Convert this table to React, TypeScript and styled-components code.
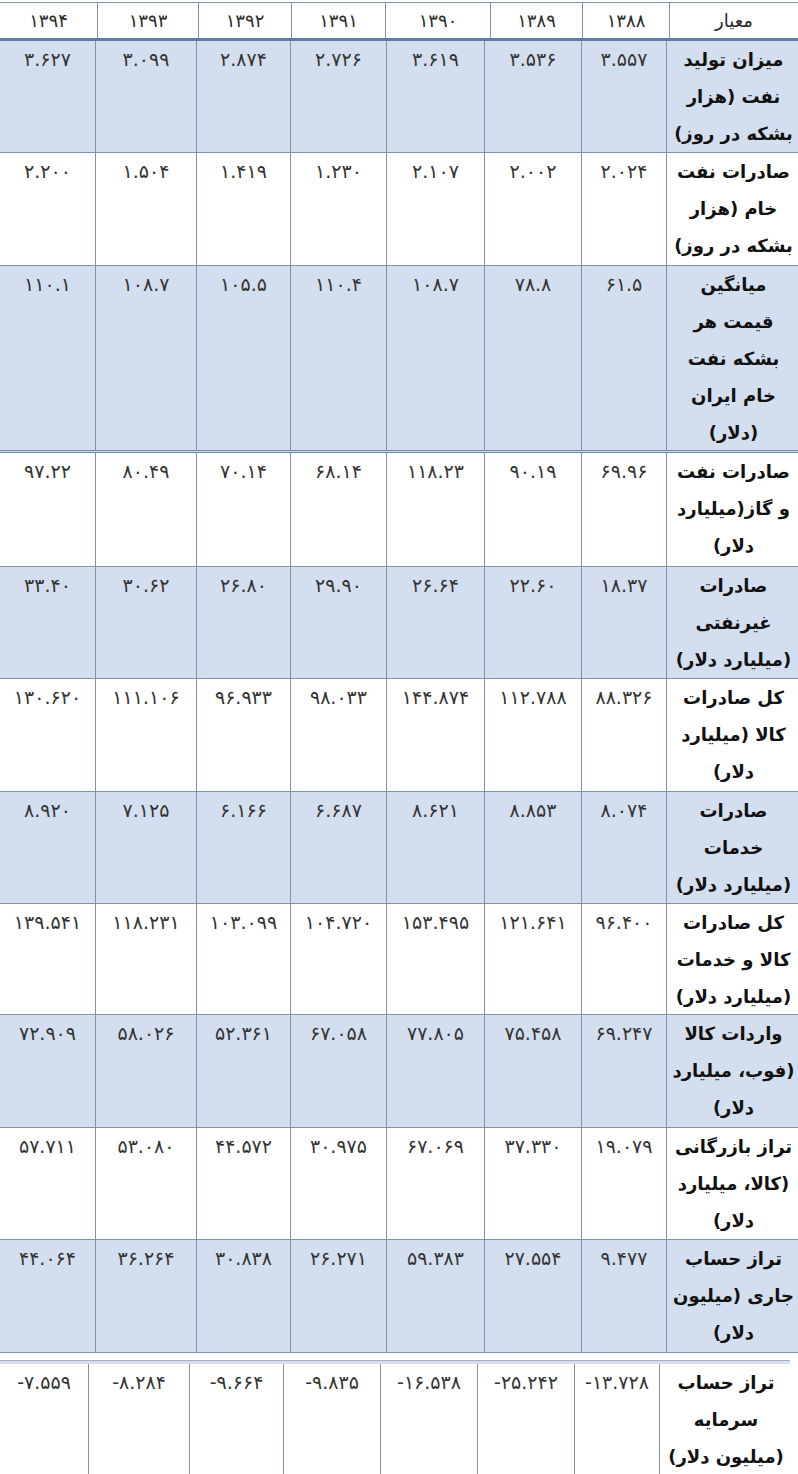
import React from 'react';
import styled, { createGlobalStyle } from 'styled-components';

const GlobalStyle = createGlobalStyle`
  html, body {
    margin: 0;
    padding: 0;
    background: #ffffff;
  }
  body {
    font-family: "DejaVu Sans", "Noto Sans", sans-serif;
    color: #111;
  }
`;

const HEAD_COLS = '128px 87px 92px 105px 94px 93px 101px 98px';
const BODY_COLS = '131px 85px 97px 98px 96px 94px 101px 96px';
const LAST_COLS = '130px 85px 97px 97px 97px 94px 101px 89px';

const fa = (s: string) => s.replace(/\d/g, (d) => '۰۱۲۳۴۵۶۷۸۹'[Number(d)]);

interface RowData {
  label: string[];
  values: string[];
  height: number;
}

const years = ['1388', '1389', '1390', '1391', '1392', '1393', '1394'];

const rows: RowData[] = [
  {
    label: ['میزان تولید', 'نفت (هزار', 'بشکه در روز)'],
    values: ['3.557', '3.536', '3.619', '2.726', '2.874', '3.099', '3.627'],
    height: 112,
  },
  {
    label: ['صادرات نفت', 'خام (هزار', 'بشکه در روز)'],
    values: ['2.024', '2.002', '2.107', '1.230', '1.419', '1.504', '2.200'],
    height: 113,
  },
  {
    label: ['میانگین', 'قیمت هر', 'بشکه نفت', 'خام ایران', '(دلار)'],
    values: ['61.5', '78.8', '108.7', '110.4', '105.5', '108.7', '110.1'],
    height: 187,
  },
  {
    label: ['صادرات نفت', 'و گاز(میلیارد', 'دلار)'],
    values: ['69.96', '90.19', '118.23', '68.14', '70.14', '80.49', '97.22'],
    height: 114,
  },
  {
    label: ['صادرات', 'غیرنفتی', '(میلیارد دلار)'],
    values: ['18.37', '22.60', '26.64', '29.90', '26.80', '30.62', '33.40'],
    height: 112,
  },
  {
    label: ['کل صادرات', 'کالا (میلیارد', 'دلار)'],
    values: ['88.326', '112.788', '144.874', '98.033', '96.933', '111.106', '130.620'],
    height: 113,
  },
  {
    label: ['صادرات', 'خدمات', '(میلیارد دلار)'],
    values: ['8.074', '8.853', '8.621', '6.687', '6.166', '7.125', '8.920'],
    height: 112,
  },
  {
    label: ['کل صادرات', 'کالا و خدمات', '(میلیارد دلار)'],
    values: ['96.400', '121.641', '153.495', '104.720', '103.099', '118.231', '139.541'],
    height: 111,
  },
  {
    label: ['واردات کالا', '(فوب، میلیارد', 'دلار)'],
    values: ['69.247', '75.458', '77.805', '67.058', '52.361', '58.026', '72.909'],
    height: 113,
  },
  {
    label: ['تراز بازرگانی', '(کالا، میلیارد', 'دلار)'],
    values: ['19.079', '37.330', '67.069', '30.975', '44.572', '53.080', '57.711'],
    height: 112,
  },
  {
    label: ['تراز حساب', 'جاری (میلیون', 'دلار)'],
    values: ['9.477', '27.554', '59.383', '26.271', '30.838', '36.264', '44.064'],
    height: 113,
  },
];

const lastRow: RowData = {
  label: ['تراز حساب', 'سرمایه', '(میلیون دلار)'],
  values: ['-13.728', '-25.242', '-16.538', '-9.835', '-9.664', '-8.284', '-7.559'],
  height: 120,
};

const Page = styled.div`
  width: 798px;
  padding-top: 2px;
  overflow: hidden;
`;

const Grid = styled.div<{ $cols: string }>`
  display: grid;
  direction: rtl;
  grid-template-columns: ${(p) => p.$cols};
  box-sizing: border-box;
`;

const HeaderRow = styled(Grid)`
  height: 39px;
  border-top: 1px solid #7f93ab;
  border-bottom: 3px solid #5f7ea6;
`;

const HeadCell = styled.div`
  display: flex;
  align-items: center;
  justify-content: center;
  font-size: 18px;
  color: #2a2a2a;
  & + & {
    border-right: 1px solid #7f93ab;
  }
`;

const BodyRow = styled(Grid)<{ $shade: boolean; $double?: boolean; $h: number }>`
  height: ${(p) => p.$h}px;
  background: ${(p) => (p.$shade ? '#d3dfee' : '#ffffff')};
  border-bottom: ${(p) => (p.$double ? '3px double #6f88a8' : '1px solid #7f93ab')};
`;

const LastTable = styled(Grid)<{ $h: number }>`
  width: 790px;
  height: ${(p) => p.$h}px;
  margin-top: 7px;
  border-top: 4px solid #d6dfea;
  position: relative;
  background: #ffffff;
  &::before {
    content: '';
    position: absolute;
    left: 0;
    right: 0;
    top: -4px;
    height: 1px;
    background: #9fb1c7;
  }
`;

const Cell = styled.div`
  line-height: 37px;
  text-align: center;
  white-space: nowrap;
  & + & {
    border-right: 1px solid #7f93ab;
  }
`;

const LabelCell = styled(Cell)`
  font-weight: bold;
  font-size: 18px;
  padding-left: 2px;
`;

const NumCell = styled(Cell)`
  font-size: 19px;
  direction: ltr;
  unicode-bidi: isolate;
  color: #333;
`;

const Line = styled.div`
  height: 37px;
`;

const RowCells: React.FC<{ row: RowData }> = ({ row }) => (
  <>
    <LabelCell>
      {row.label.map((l) => (
        <Line key={l}>{l}</Line>
      ))}
    </LabelCell>
    {row.values.map((v, i) => (
      <NumCell key={i}>{fa(v)}</NumCell>
    ))}
  </>
);

export default function App() {
  return (
    <Page>
      <GlobalStyle />
      <HeaderRow $cols={HEAD_COLS}>
        <HeadCell>معیار</HeadCell>
        {years.map((y) => (
          <HeadCell key={y}>{fa(y)}</HeadCell>
        ))}
      </HeaderRow>
      {rows.map((r, i) => (
        <BodyRow key={i} $cols={BODY_COLS} $shade={i % 2 === 0} $double={i === 2} $h={r.height}>
          <RowCells row={r} />
        </BodyRow>
      ))}
      <LastTable $cols={LAST_COLS} $h={lastRow.height}>
        <RowCells row={lastRow} />
      </LastTable>
    </Page>
  );
}
